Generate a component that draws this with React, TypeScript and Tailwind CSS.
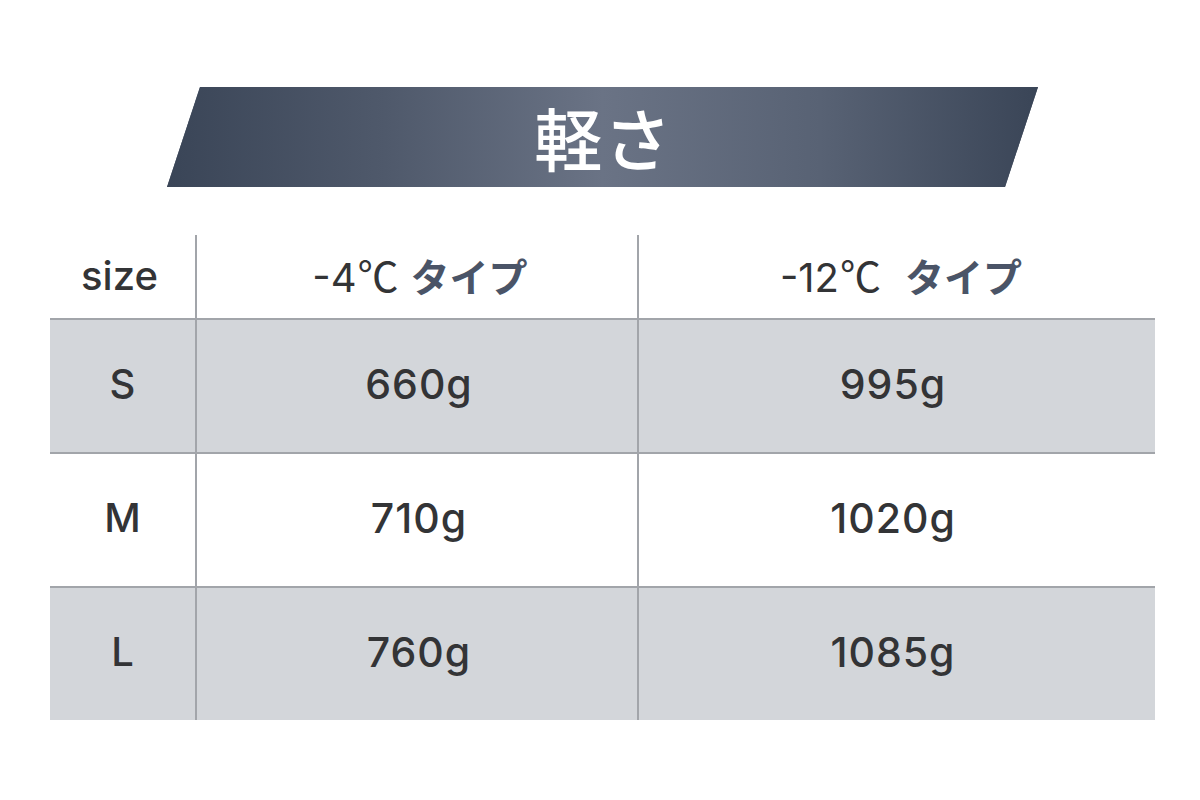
import React from "react";

const rows = [
  { size: "S", a: "660g", b: "995g", gray: true },
  { size: "M", a: "710g", b: "1020g", gray: false },
  { size: "L", a: "760g", b: "1085g", gray: true },
];

function Deg({ t }: { t: string }) {
  return (
    <span className="text-[40px] text-[#333436] font-['Inter',sans-serif]">
      {t}
      <span className="font-['Noto_Sans_CJK_JP',sans-serif] font-normal text-[41px] ml-[1px]">℃</span>
    </span>
  );
}

export default function App() {
  return (
    <div className="w-[1200px] h-[800px] bg-white flex flex-col font-['Inter','Noto_Sans_CJK_JP',sans-serif]">
      <div className="mt-[87px] ml-[167px] w-[871px] h-[100px] [clip-path:polygon(33px_0,100%_0,calc(100%-33px)_100%,0_100%)] bg-[linear-gradient(90deg,#3a4557_0%,#4f596b_25%,#6a7385_50%,#586274_75%,#3a4557_100%)] bg-[#4a5466] flex items-center justify-center">
        <span className="text-white text-[68px] leading-none font-medium font-['Noto_Sans_CJK_JP',sans-serif] tracking-[0.02em] pl-[2px]">
          軽さ
        </span>
      </div>

      <div className="mt-[48px] ml-[50px] w-[1105px] flex flex-col">
        <div className="grid grid-cols-[147px_442px_516px] h-[83px]">
          <div className="border-r-2 border-[#a2a5aa] flex items-center justify-center pb-[2px]">
            <span className="text-[40px] font-medium text-[#333436] pr-[6px]">size</span>
          </div>
          <div className="border-r-2 border-[#a2a5aa] flex items-center justify-center pb-[2px] pl-[6px]">
            <Deg t="-4" />
            <span className="ml-[12px] text-[39px] font-bold text-[#4a5467] font-['Noto_Sans_CJK_JP',sans-serif]">タイプ</span>
          </div>
          <div className="flex items-center justify-center pb-[2px] pl-[8px]">
            <Deg t="-12" />
            <span className="ml-[24px] text-[39px] font-bold text-[#4a5467] font-['Noto_Sans_CJK_JP',sans-serif]">タイプ</span>
          </div>
        </div>
        {rows.map((r) => (
          <div
            key={r.size}
            className={`grid grid-cols-[147px_442px_516px] h-[134px] border-t-2 border-[#a2a5aa] ${r.gray ? "bg-[#d3d6da]" : "bg-white"}`}
          >
            <div className="border-r-2 border-[#a2a5aa] flex items-center justify-center">
              <span className="text-[40px] font-medium text-[#333436] pb-[4px]">{r.size}</span>
            </div>
            <div className="border-r-2 border-[#a2a5aa] flex items-center justify-center">
              <span className="text-[41px] font-medium tracking-[1px] text-[#333436] pl-[4px] pb-[2px]">{r.a}</span>
            </div>
            <div className="flex items-center justify-center">
              <span className="text-[41px] font-medium tracking-[1px] text-[#333436] pr-[8px] pb-[2px]">{r.b}</span>
            </div>
          </div>
        ))}
      </div>
    </div>
  );
}
